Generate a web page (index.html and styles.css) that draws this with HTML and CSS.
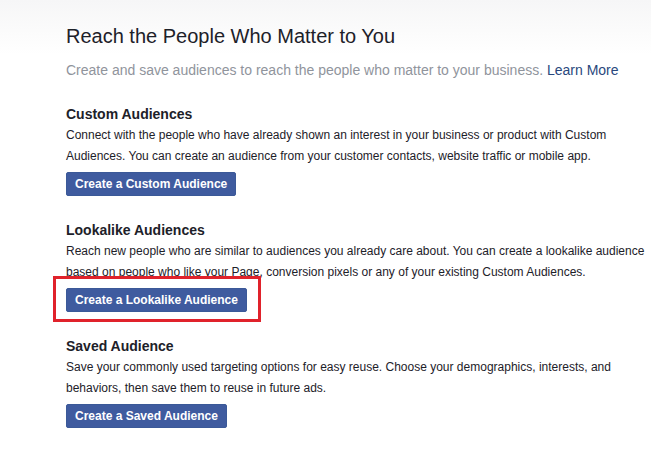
FILE: index.html
```html
<!DOCTYPE html>
<html lang="en">
<head>
<meta charset="utf-8">
<title>Audiences</title>
<link rel="stylesheet" href="styles.css">
</head>
<body>
<main class="page">
  <h1 class="title">Reach the People Who Matter to You</h1>
  <p class="subtitle">Create and save audiences to reach the people who matter to your business. <a class="learn" href="#">Learn More</a></p>

  <section class="block">
    <h2 class="block-title">Custom Audiences</h2>
    <p class="block-text">Connect with the people who have already shown an interest in your business or product with Custom Audiences. You can create an audience from your customer contacts, website traffic or mobile app.</p>
    <div class="action"><button class="btn">Create a Custom Audience</button></div>
  </section>

  <section class="block">
    <h2 class="block-title">Lookalike Audiences</h2>
    <p class="block-text">Reach new people who are similar to audiences you already care about. You can create a lookalike audience based on people who like your Page, conversion pixels or any of your existing Custom Audiences.</p>
    <div class="action"><button class="btn">Create a Lookalike Audience</button><span class="highlight"></span></div>
  </section>

  <section class="block">
    <h2 class="block-title">Saved Audience</h2>
    <p class="block-text">Save your commonly used targeting options for easy reuse. Choose your demographics, interests, and behaviors, then save them to reuse in future ads.</p>
    <div class="action"><button class="btn">Create a Saved Audience</button></div>
  </section>
</main>
</body>
</html>
```

FILE: styles.css
```css
html, body {
  margin: 0;
  padding: 0;
}

body {
  background: linear-gradient(to bottom, #f6f6f7 0px, #fbfbfb 30px, #ffffff 55px);
  font-family: "Liberation Sans", Arial, Helvetica, sans-serif;
  color: #1d2129;
  height: 452px;
  overflow: hidden;
}

.page {
  padding: 24px 0 0 66px;
  display: flex;
  flex-direction: column;
}

.title {
  margin: 0;
  font-size: 20px;
  line-height: 24px;
  font-weight: normal;
  color: #1d2129;
}

.subtitle {
  margin: 13px 0 0;
  font-size: 14px;
  line-height: 18px;
  color: #90949c;
}

.learn {
  color: #29487d;
  text-decoration: none;
}

.block {
  margin-top: 24px;
  padding-top: 1px;
  display: flex;
  flex-direction: column;
}

.subtitle + .block {
  margin-top: 25px;
}

.block-title {
  margin: 0;
  font-size: 14px;
  line-height: 18px;
  font-weight: bold;
  color: #1d2129;
}

.block-text {
  margin: 2px 0 0;
  font-size: 12px;
  line-height: 21px;
  color: #1d2129;
}

.action {
  position: relative;
  margin-top: 5px;
  align-self: flex-start;
  display: flex;
}

.btn {
  height: 24px;
  padding: 0 8px;
  border: 1px solid #3b5998;
  border-radius: 2px;
  background: #3f5b9f;
  color: #ffffff;
  font-family: "Liberation Sans", Arial, Helvetica, sans-serif;
  font-size: 12px;
  font-weight: bold;
  line-height: 22px;
  cursor: pointer;
}

.highlight {
  position: absolute;
  left: -13px;
  top: -12px;
  width: 202px;
  height: 40px;
  border: 3px solid #e0222b;
  pointer-events: none;
}
```
